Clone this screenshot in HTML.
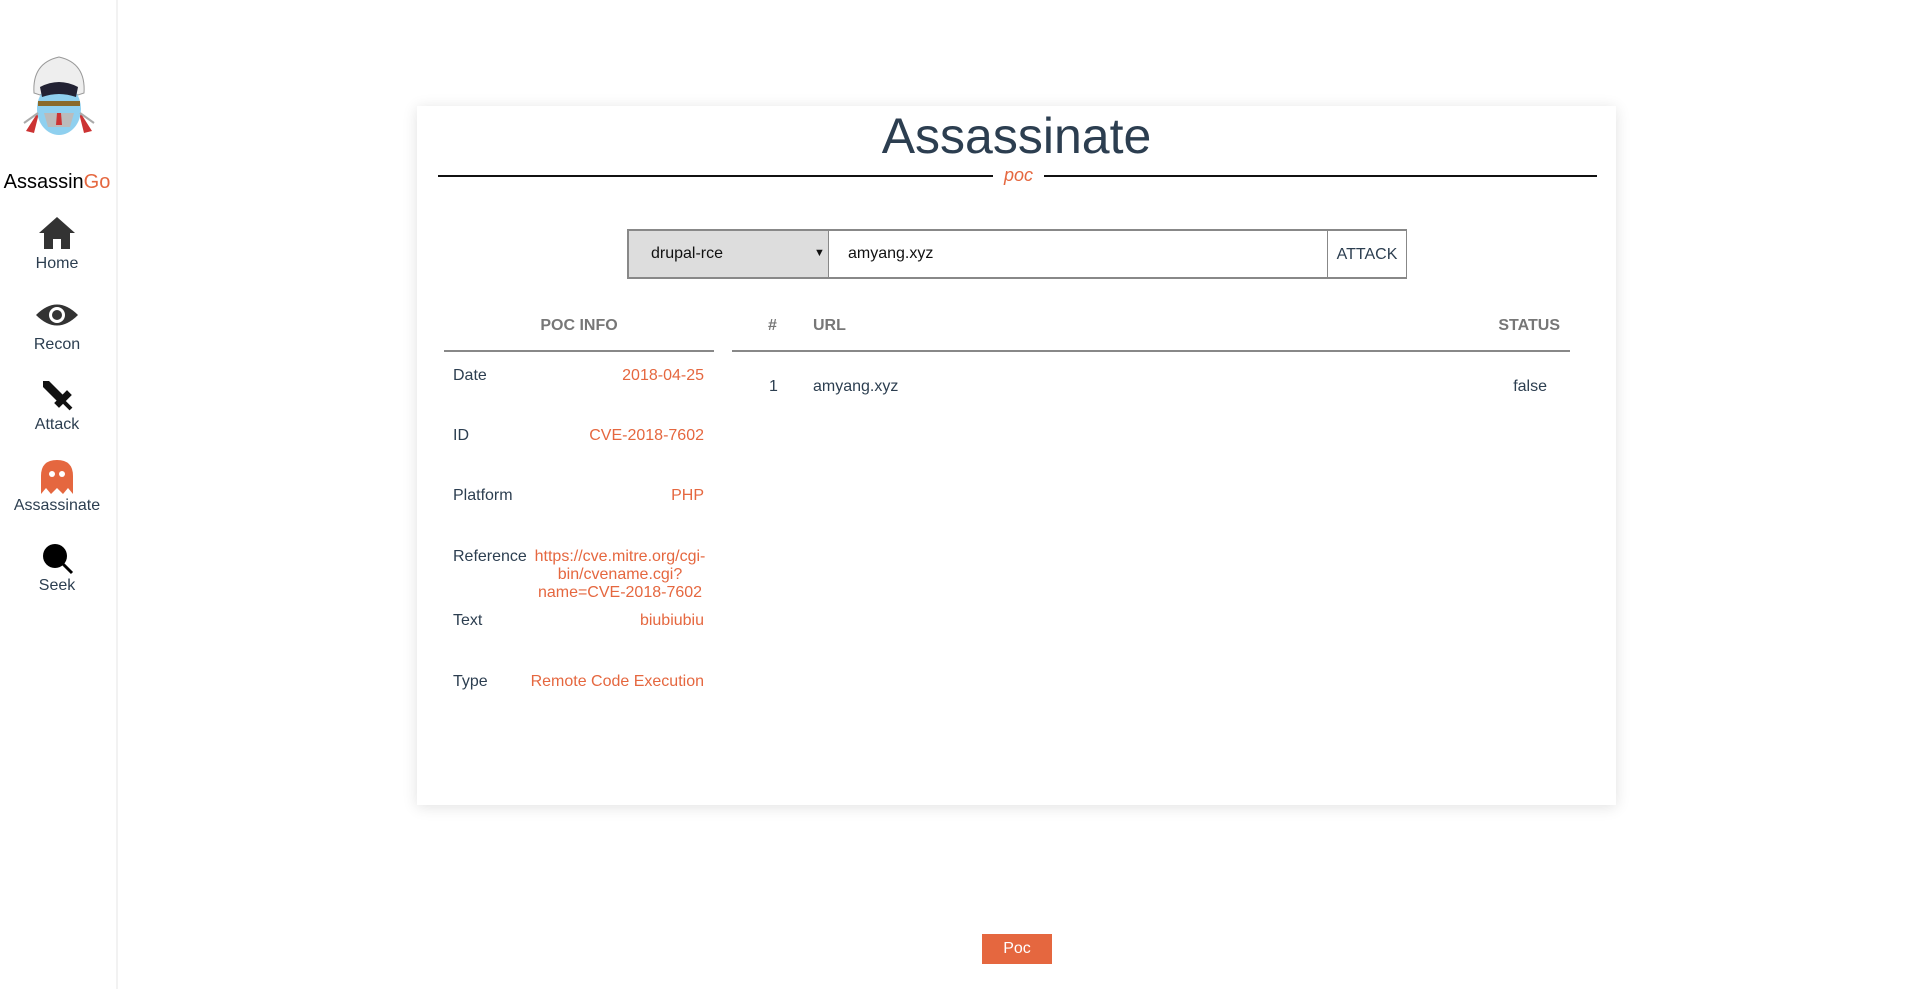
<!DOCTYPE html>
<html><head><meta charset="utf-8"><style>
*{margin:0;padding:0;box-sizing:border-box}
html,body{width:1917px;height:989px;background:#fff;font-family:"Liberation Sans",sans-serif;overflow:hidden;position:relative}
.a{position:absolute}
.side{left:0;top:0;width:118px;height:989px;border-right:2px solid #f2f2f2}
.nav{width:114px;text-align:center;color:#2c3e50;font-size:16px}
.or{color:#e5673f}
.card{left:417px;top:106px;width:1199px;height:699px;background:#fff;box-shadow:0 2px 14px rgba(0,0,0,.12)}
.t{font-size:16px;color:#2c3e50}
.v{font-size:16px;color:#e5673f;text-align:right}
.h{font-size:16px;font-weight:bold;color:#777}
</style></head><body>
<div class="a side"></div>
<svg class="a" style="left:20px;top:53px" width="78" height="86" viewBox="0 0 78 86">
<path d="M14 40 Q12 10 39 4 Q66 10 64 40 L58 42 Q39 30 20 42Z" fill="#eee" stroke="#999" stroke-width="1"/>
<path d="M6 78 L20 56 L14 80Z M72 78 L58 56 L64 80Z" fill="#c33"/>
<ellipse cx="39" cy="56" rx="22" ry="26" fill="#8fd0ef"/>
<path d="M20 34 Q39 24 58 34 L56 44 Q39 38 22 44Z" fill="#223"/>
<rect x="18" y="48" width="42" height="5" fill="#8a6a2a"/>
<path d="M24 60 L54 60 L50 74 L28 74Z" fill="#bbb"/>
<path d="M37 60 L41 60 L42 72 L36 72Z" fill="#c33"/>
<line x1="4" y1="70" x2="18" y2="60" stroke="#aaa" stroke-width="2"/><line x1="74" y1="70" x2="60" y2="60" stroke="#aaa" stroke-width="2"/>
</svg>
<div class="a nav" style="top:171px;font-size:20px;color:#000;left:0">Assassin<span class="or">Go</span></div>
<svg class="a" style="left:39px;top:217px" width="36" height="32" viewBox="0 0 36 32"><path d="M18 0 L36 16 L31 16 L31 32 L22 32 L22 22 L14 22 L14 32 L5 32 L5 16 L0 16Z" fill="#333"/></svg>
<div class="a nav" style="top:255px">Home</div>
<svg class="a" style="left:36px;top:302px" width="42" height="26" viewBox="0 0 42 26"><path d="M0 13 Q21 -8 42 13 Q21 34 0 13Z" fill="#333"/><circle cx="21" cy="13" r="8" fill="#fff"/><circle cx="21" cy="13" r="5" fill="#333"/></svg>
<div class="a nav" style="top:336px">Recon</div>
<svg class="a" style="left:41px;top:379px" width="32" height="32" viewBox="0 0 32 32"><path d="M2 2 L8 2 L24 18 L18 24 L2 8Z" fill="#111"/><path d="M16 24 L26 14 L28 16 L18 26Z M22 22 L30 30" stroke="#111" stroke-width="4" fill="#111"/></svg>
<div class="a nav" style="top:416px">Attack</div>
<svg class="a" style="left:41px;top:460px" width="32" height="34" viewBox="0 0 32 34"><path d="M0 16 Q0 0 16 0 Q32 0 32 16 L32 34 L27 28 L22 34 L16 28 L10 34 L5 28 L0 34Z" fill="#e5673f"/><circle cx="11" cy="14" r="3" fill="#fff"/><circle cx="21" cy="14" r="3" fill="#fff"/></svg>
<div class="a nav" style="top:497px">Assassinate</div>
<svg class="a" style="left:42px;top:543px" width="32" height="32" viewBox="0 0 32 32"><circle cx="13" cy="13" r="12" fill="#000"/><line x1="21" y1="21" x2="30" y2="30" stroke="#000" stroke-width="3"/></svg>
<div class="a nav" style="top:577px">Seek</div>

<div class="a card"></div>
<div class="a" style="left:417px;top:107px;width:1199px;text-align:center;font-size:50px;color:#2c3e50">Assassinate</div>
<div class="a" style="left:438px;top:175px;width:555px;height:2px;background:#111"></div>
<div class="a" style="left:1044px;top:175px;width:553px;height:2px;background:#111"></div>
<div class="a" style="left:993px;top:165px;width:51px;text-align:center;font-style:italic;font-size:18px;color:#e5673f">poc</div>

<div class="a" style="left:627px;top:229px;width:202px;height:50px;background:#ddd;border:2px solid #888;border-right:1px solid #888"></div>
<div class="a t" style="left:651px;top:245px;color:#111">drupal-rce</div>
<div class="a" style="left:814px;top:247px;font-size:11px;color:#111">▼</div>
<div class="a" style="left:828px;top:229px;width:500px;height:50px;border:2px solid #888;border-left:1px solid #888;border-right:1px solid #888"></div>
<div class="a t" style="left:848px;top:245px;color:#111">amyang.xyz</div>
<div class="a" style="left:1327px;top:229px;width:80px;height:50px;border:1px solid #888;border-bottom:2px solid #888;border-top:2px solid #888"></div>
<div class="a t" style="left:1327px;top:246px;width:80px;text-align:center">ATTACK</div>

<div class="a h" style="left:444px;top:317px;width:270px;text-align:center">POC INFO</div>
<div class="a" style="left:444px;top:350px;width:270px;height:2px;background:#888"></div>
<div class="a h" style="left:768px;top:317px">#</div>
<div class="a h" style="left:813px;top:317px">URL</div>
<div class="a h" style="left:1392px;top:317px;width:168px;text-align:right">STATUS</div>
<div class="a" style="left:732px;top:350px;width:838px;height:2px;background:#888"></div>
<div class="a t" style="left:769px;top:378px">1</div>
<div class="a t" style="left:813px;top:378px">amyang.xyz</div>
<div class="a t" style="left:1392px;top:378px;width:155px;text-align:right">false</div>

<div class="a t" style="left:453px;top:367px">Date</div><div class="a v" style="left:536px;top:367px;width:168px">2018-04-25</div>
<div class="a t" style="left:453px;top:427px">ID</div><div class="a v" style="left:536px;top:427px;width:168px">CVE-2018-7602</div>
<div class="a t" style="left:453px;top:487px">Platform</div><div class="a v" style="left:536px;top:487px;width:168px">PHP</div>
<div class="a t" style="left:453px;top:548px">Reference</div>
<div class="a" style="left:532px;top:548px;width:176px;text-align:center;font-size:16px;line-height:18px;color:#e5673f">https://cve.mitre.org/cgi-<br>bin/cvename.cgi?<br>name=CVE-2018-7602</div>
<div class="a t" style="left:453px;top:612px">Text</div><div class="a v" style="left:536px;top:612px;width:168px">biubiubiu</div>
<div class="a t" style="left:453px;top:673px">Type</div><div class="a v" style="left:516px;top:673px;width:188px">Remote Code Execution</div>

<div class="a" style="left:982px;top:934px;width:70px;height:30px;background:#e5673f;color:#fff;font-size:16px;text-align:center;line-height:30px">Poc</div>
</body></html>
